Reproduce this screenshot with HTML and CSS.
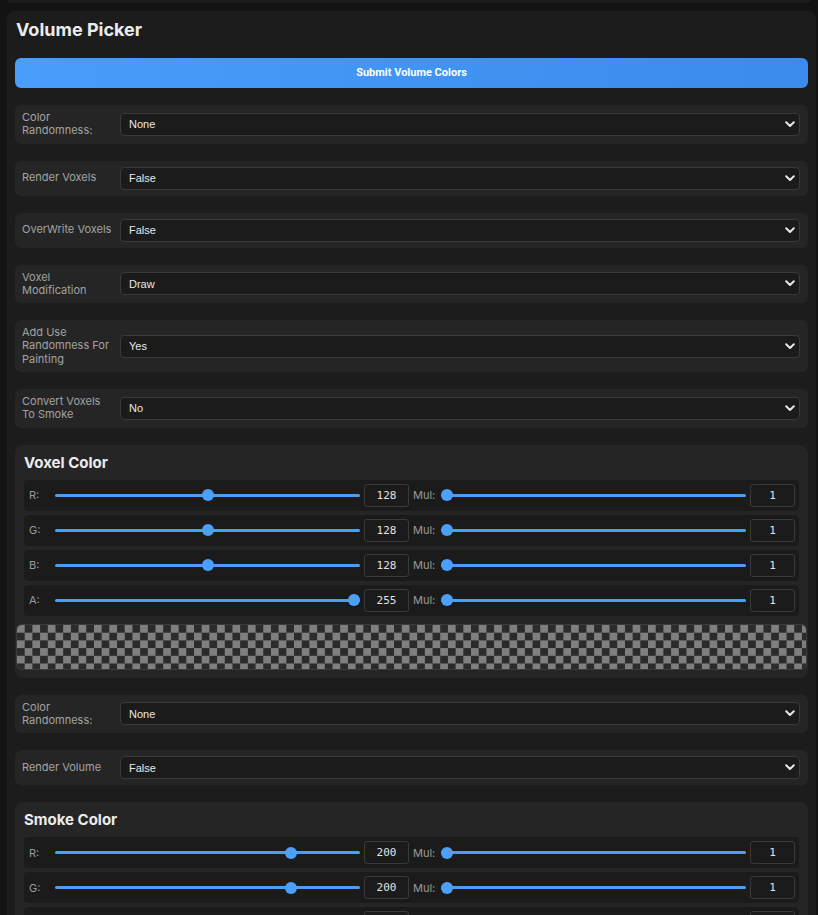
FILE: index.html
```html
<!DOCTYPE html>
<html>
<head>
<meta charset="utf-8">
<link rel="stylesheet" href="styles.css">
</head>
<body>
<div class="prev-panel"></div>
<div class="panel">
  <h2 class="title">Volume Picker</h2>
  <button class="submit">Submit Volume Colors</button>

  <div class="field">
    <label class="field-label">Color Randomness:</label>
    <div class="select-wrap"><select class="select"><option>None</option></select>
      <svg class="chev" width="10" height="7" viewBox="0 0 10 7"><path d="M1.2 1.2 L5 5 L8.8 1.2" fill="none" stroke="#e6e6e6" stroke-width="2" stroke-linecap="round" stroke-linejoin="round"/></svg></div>
  </div>
  <div class="field">
    <label class="field-label">Render Voxels</label>
    <div class="select-wrap"><select class="select"><option>False</option></select>
      <svg class="chev" width="10" height="7" viewBox="0 0 10 7"><path d="M1.2 1.2 L5 5 L8.8 1.2" fill="none" stroke="#e6e6e6" stroke-width="2" stroke-linecap="round" stroke-linejoin="round"/></svg></div>
  </div>
  <div class="field">
    <label class="field-label">OverWrite Voxels</label>
    <div class="select-wrap"><select class="select"><option>False</option></select>
      <svg class="chev" width="10" height="7" viewBox="0 0 10 7"><path d="M1.2 1.2 L5 5 L8.8 1.2" fill="none" stroke="#e6e6e6" stroke-width="2" stroke-linecap="round" stroke-linejoin="round"/></svg></div>
  </div>
  <div class="field">
    <label class="field-label">Voxel Modification</label>
    <div class="select-wrap"><select class="select"><option>Draw</option></select>
      <svg class="chev" width="10" height="7" viewBox="0 0 10 7"><path d="M1.2 1.2 L5 5 L8.8 1.2" fill="none" stroke="#e6e6e6" stroke-width="2" stroke-linecap="round" stroke-linejoin="round"/></svg></div>
  </div>
  <div class="field">
    <label class="field-label">Add Use Randomness For Painting</label>
    <div class="select-wrap"><select class="select"><option>Yes</option></select>
      <svg class="chev" width="10" height="7" viewBox="0 0 10 7"><path d="M1.2 1.2 L5 5 L8.8 1.2" fill="none" stroke="#e6e6e6" stroke-width="2" stroke-linecap="round" stroke-linejoin="round"/></svg></div>
  </div>
  <div class="field">
    <label class="field-label">Convert Voxels To Smoke</label>
    <div class="select-wrap"><select class="select"><option>No</option></select>
      <svg class="chev" width="10" height="7" viewBox="0 0 10 7"><path d="M1.2 1.2 L5 5 L8.8 1.2" fill="none" stroke="#e6e6e6" stroke-width="2" stroke-linecap="round" stroke-linejoin="round"/></svg></div>
  </div>

  <div class="color-section">
    <h3 class="section-title">Voxel Color</h3>
    <div class="slider-row">
      <span class="ch-label">R:</span>
      <input class="range" type="range" min="0" max="255" value="128">
      <input class="num" type="number" value="128">
      <span class="mul-label">Mul:</span>
      <input class="range" type="range" min="1" max="10" value="1">
      <input class="num" type="number" value="1">
    </div>
    <div class="slider-row">
      <span class="ch-label">G:</span>
      <input class="range" type="range" min="0" max="255" value="128">
      <input class="num" type="number" value="128">
      <span class="mul-label">Mul:</span>
      <input class="range" type="range" min="1" max="10" value="1">
      <input class="num" type="number" value="1">
    </div>
    <div class="slider-row">
      <span class="ch-label">B:</span>
      <input class="range" type="range" min="0" max="255" value="128">
      <input class="num" type="number" value="128">
      <span class="mul-label">Mul:</span>
      <input class="range" type="range" min="1" max="10" value="1">
      <input class="num" type="number" value="1">
    </div>
    <div class="slider-row">
      <span class="ch-label">A:</span>
      <input class="range" type="range" min="0" max="255" value="255">
      <input class="num" type="number" value="255">
      <span class="mul-label">Mul:</span>
      <input class="range" type="range" min="1" max="10" value="1">
      <input class="num" type="number" value="1">
    </div>
    <div class="preview"></div>
  </div>

  <div class="field">
    <label class="field-label">Color Randomness:</label>
    <div class="select-wrap"><select class="select"><option>None</option></select>
      <svg class="chev" width="10" height="7" viewBox="0 0 10 7"><path d="M1.2 1.2 L5 5 L8.8 1.2" fill="none" stroke="#e6e6e6" stroke-width="2" stroke-linecap="round" stroke-linejoin="round"/></svg></div>
  </div>
  <div class="field">
    <label class="field-label">Render Volume</label>
    <div class="select-wrap"><select class="select"><option>False</option></select>
      <svg class="chev" width="10" height="7" viewBox="0 0 10 7"><path d="M1.2 1.2 L5 5 L8.8 1.2" fill="none" stroke="#e6e6e6" stroke-width="2" stroke-linecap="round" stroke-linejoin="round"/></svg></div>
  </div>

  <div class="color-section">
    <h3 class="section-title">Smoke Color</h3>
    <div class="slider-row">
      <span class="ch-label">R:</span>
      <input class="range" type="range" min="0" max="255" value="200">
      <input class="num" type="number" value="200">
      <span class="mul-label">Mul:</span>
      <input class="range" type="range" min="1" max="10" value="1">
      <input class="num" type="number" value="1">
    </div>
    <div class="slider-row">
      <span class="ch-label">G:</span>
      <input class="range" type="range" min="0" max="255" value="200">
      <input class="num" type="number" value="200">
      <span class="mul-label">Mul:</span>
      <input class="range" type="range" min="1" max="10" value="1">
      <input class="num" type="number" value="1">
    </div>
    <div class="slider-row">
      <span class="ch-label">B:</span>
      <input class="range" type="range" min="0" max="255" value="200">
      <input class="num" type="number" value="200">
      <span class="mul-label">Mul:</span>
      <input class="range" type="range" min="1" max="10" value="1">
      <input class="num" type="number" value="1">
    </div>
    <div class="slider-row">
      <span class="ch-label">A:</span>
      <input class="range" type="range" min="0" max="255" value="255">
      <input class="num" type="number" value="255">
      <span class="mul-label">Mul:</span>
      <input class="range" type="range" min="1" max="10" value="1">
      <input class="num" type="number" value="1">
    </div>
    <div class="preview"></div>
  </div>
</div>
</body>
</html>
```
FILE: styles.css
```css
html, body {
  margin: 0;
  padding: 0;
  background: #131313;
}
body {
  padding-left: 7px;
  font-family: Inter, "Noto Sans", sans-serif;
  color: #e6e6e6;
}
.prev-panel {
  width: 804px;
  height: 3px;
  background: #1c1c1c;
  border-radius: 0 0 6px 6px;
  margin-bottom: 8px;
}
.panel {
  width: 809px;
  box-sizing: border-box;
  background: #1c1c1c;
  border-radius: 8px;
  padding: 8px 8px 20px 8px;
  display: flex;
  flex-direction: column;
  gap: 17px;
}
.title {
  margin: 0;
  padding-left: 1px;
  font-size: 18px;
  line-height: 22px;
  font-weight: 700;
  color: #ececec;
}
.submit {
  height: 30px;
  border: none;
  border-radius: 6px;
  background: linear-gradient(100deg, #4a9df9 0%, #3a8bec 100%);
  color: #ffffff;
  font-family: Roboto, "Liberation Sans", sans-serif;
  font-weight: 700;
  font-size: 11px;
  padding: 0 0 1px 0;
}
.field {
  display: flex;
  align-items: center;
  gap: 8px;
  background: #252525;
  border-radius: 6px;
  padding: 6px 8px 6px 7px;
}
.field-label {
  width: 90px;
  flex: none;
  font-size: 11px;
  line-height: 13.3px;
  color: #a3a3a3;
}
.select-wrap {
  position: relative;
  flex: 1;
  display: flex;
}
.select {
  -webkit-appearance: none;
  appearance: none;
  flex: 1;
  height: 23px;
  box-sizing: border-box;
  background: #1b1b1b;
  border: 1px solid #3a3a3a;
  border-radius: 4px;
  color: #e8e8e8;
  font-family: "Liberation Sans", Arial, sans-serif;
  font-size: 11px;
  padding: 0 8px;
  margin: 0;
}
.chev {
  position: absolute;
  right: 5px;
  top: 8px;
  pointer-events: none;
}
.color-section {
  background: #252525;
  border-radius: 8px;
  padding: 8px 9px;
  display: flex;
  flex-direction: column;
  gap: 4px;
}
.section-title {
  margin: 0 0 3px 0;
  font-size: 15px;
  line-height: 20px;
  font-weight: 700;
  color: #ececec;
}
.slider-row {
  display: flex;
  align-items: center;
  gap: 4px;
  height: 31px;
  background: #1b1b1b;
  border-radius: 4px;
  padding: 0 4px 0 5px;
}
.ch-label {
  width: 22px;
  flex: none;
  font-size: 11px;
  color: #9a9a9a;
}
.mul-label {
  width: 24px;
  flex: none;
  font-size: 11px;
  color: #9a9a9a;
}
.range {
  -webkit-appearance: none;
  appearance: none;
  flex: 1;
  min-width: 0;
  height: 12px;
  margin: 0;
  background: transparent;
}
.range::-webkit-slider-runnable-track {
  height: 3px;
  background: #4a9df8;
  border-radius: 2px;
}
.range::-webkit-slider-thumb {
  -webkit-appearance: none;
  appearance: none;
  width: 12px;
  height: 12px;
  border-radius: 50%;
  background: #4da0fa;
  border: none;
  margin-top: -4.5px;
}
.num {
  width: 45px;
  height: 23px;
  box-sizing: border-box;
  flex: none;
  background: #1b1b1b;
  border: 1px solid #3a3a3a;
  border-radius: 3px;
  color: #e2e2e2;
  font-family: "DejaVu Sans Mono", monospace;
  font-size: 11px;
  text-align: center;
  padding: 0;
  margin: 0;
  -moz-appearance: textfield;
}
.num::-webkit-inner-spin-button,
.num::-webkit-outer-spin-button {
  -webkit-appearance: none;
  margin: 0;
}
.preview {
  margin: 4px -8px 0 -8px;
  height: 46px;
  box-sizing: border-box;
  border: 1px solid #3c3c3c;
  border-radius: 6px;
  background: repeating-conic-gradient(#2b2b2b 0 25%, #7f7f7f 0 50%) 0 0 / 15.4px 15.4px;
}
```
